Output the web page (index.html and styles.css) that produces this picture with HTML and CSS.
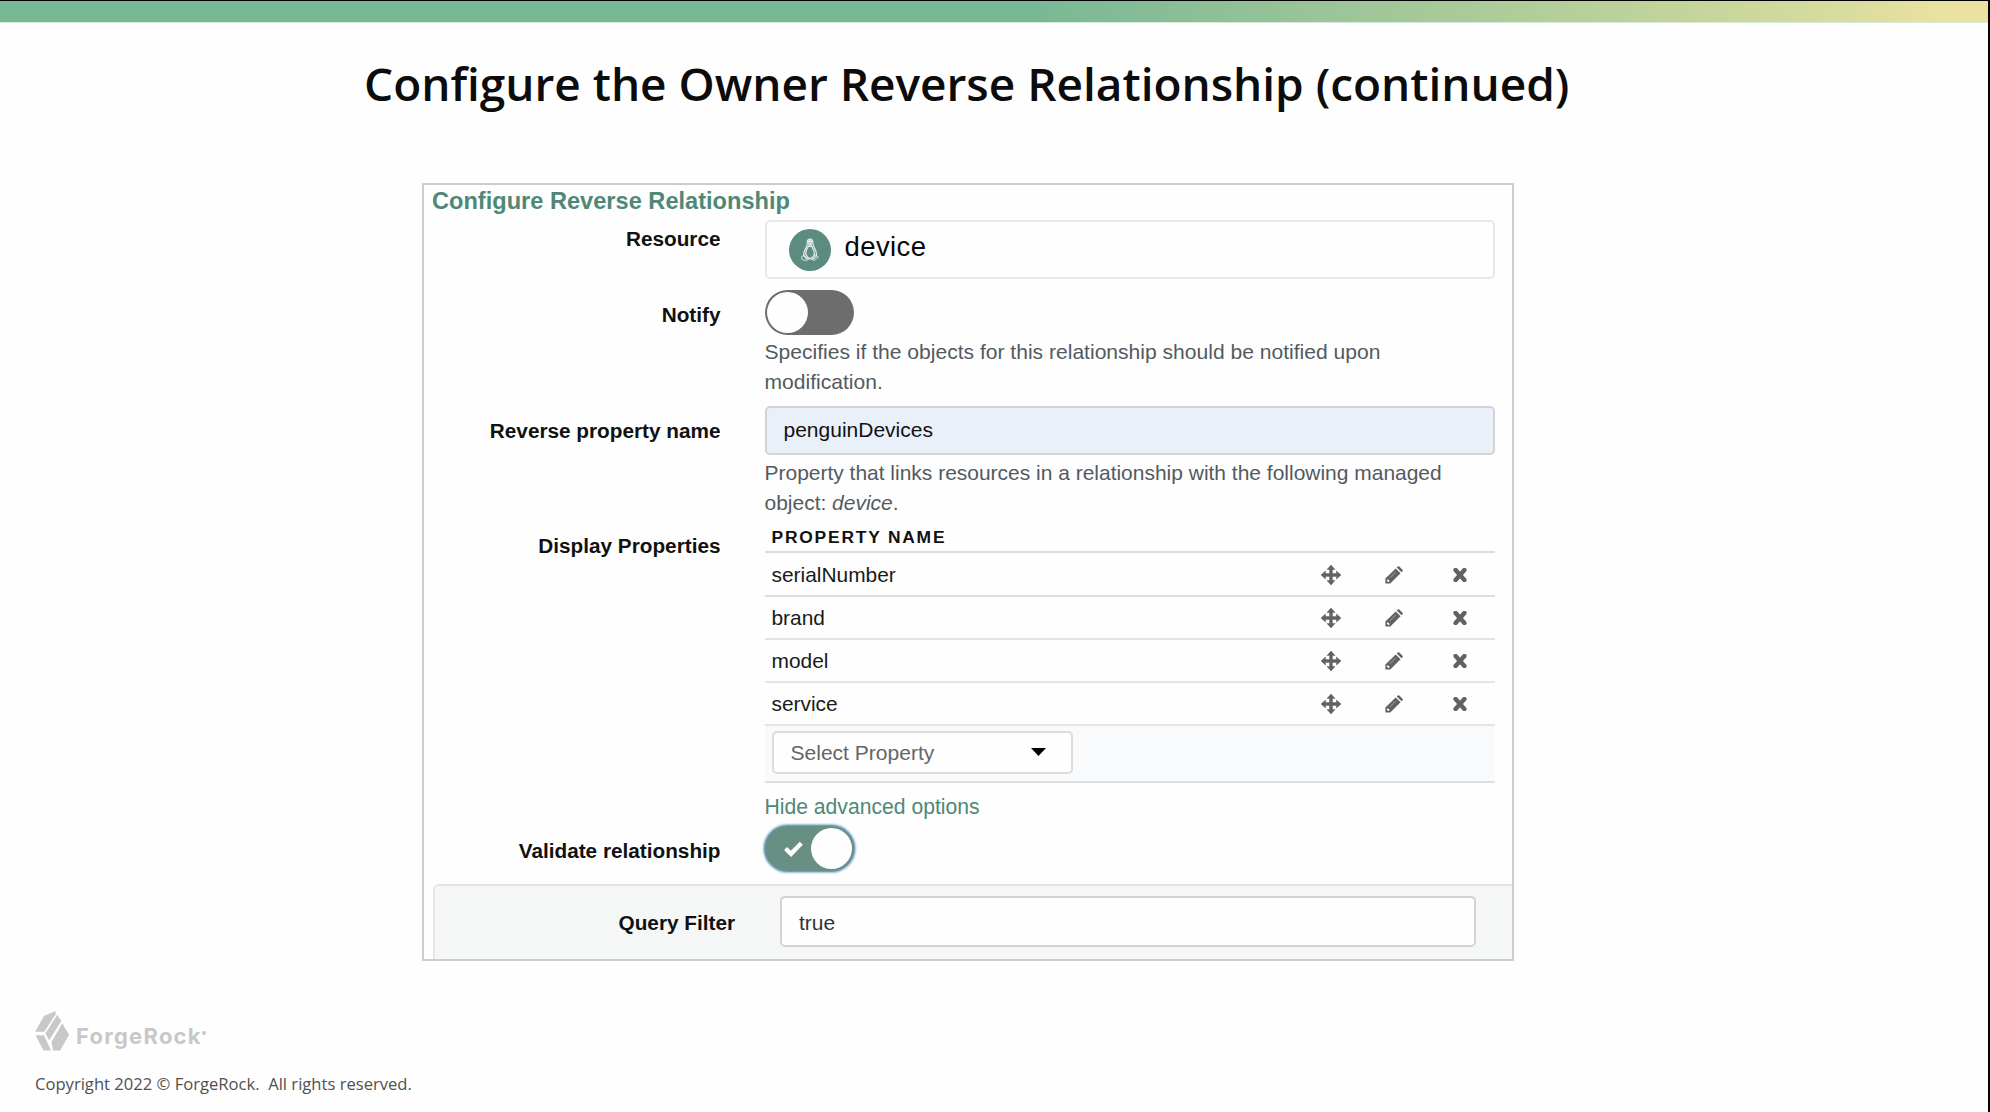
FILE: index.html
```html
<!DOCTYPE html>
<html lang="en">
<head>
<meta charset="utf-8">
<title>Configure the Owner Reverse Relationship</title>
<link rel="stylesheet" href="styles.css">
</head>
<body>
<svg class="defs" width="0" height="0" aria-hidden="true">
  <symbol id="move" viewBox="0 0 20 20">
    <path d="M10 0l4 4.500h-2.600v4.100h4.100V6L20 10l-4.500 4v-2.600h-4.100v4.100H14L10 20l-4-4.500h2.600v-4.100H4.500V14L0 10l4.500-4v2.600h4.100V4.500H6z" stroke="currentColor" stroke-width=".5" stroke-linejoin="round"/>
  </symbol>
  <symbol id="pencil" viewBox="0 0 18 18">
    <path fill-rule="evenodd" d="M10.700 2.400l4.900 4.900L5.300 17.500H.4v-4.900zM2.700 13.200l-.8.800v1.100h.9v.9h1l.9-.9z"/>
    <path d="M11.700 1.500l1-1q.8-.7 1.600 0l3.200 3.200q.7.800 0 1.600l-1 1z"/>
    <path d="M4.800 11.900l6-6" stroke="#a8a8a8" stroke-width=".9"/>
  </symbol>
  <symbol id="cross" viewBox="0 0 14 14">
    <path d="M2.600 2l8.800 10M11.400 2l-8.800 10" stroke="currentColor" stroke-width="4.400" stroke-linecap="round"/>
  </symbol>
</svg>
<div class="slide">
  <div class="accent"></div>
  <h1 class="title">Configure the Owner Reverse Relationship (continued)</h1>

  <main class="panel">
    <h2 class="panel-title">Configure Reverse Relationship</h2>

    <div class="row row-resource">
      <div class="label">Resource</div>
      <div class="field">
        <div class="resource">
          <span class="badge">
            <svg width="20" height="24" viewBox="0 0 20 24" fill="none" stroke="#e6f0ec" stroke-width="1.200">
              <path d="M7.200 5Q7 1.300 10 1.200t2.900 3.800q.1 2.800 1.700 5.400 2.300 3.800 1.800 7.400l-3 3.200H6.800l-3.200-3.500q0-3.600 2-6.900Q7.300 7.800 7.200 5z"/>
              <path d="M8.200 8.500Q5.700 12.500 5.600 16l2.800 4h3.800l2.200-3.500q0-4-2.500-8z"/>
              <path d="M8 3.200h4M8 5h4M8.300 6.800h3.600" stroke-width="1.700"/>
              <path d="M4.300 17.200l-2.600 1.500.2 2.800 4.800 1.200 1.600-1.800zM15.500 17.200l2.900 2-4.200 3.300-1.900-.8v-2.500z" stroke-width=".8"/>
            </svg>
          </span>
          <span class="resource-name">device</span>
        </div>
      </div>
    </div>

    <div class="row row-notify">
      <div class="label">Notify</div>
      <div class="field">
        <div class="toggle"><span class="knob"></span></div>
        <p class="help">Specifies if the objects for this relationship should be notified upon<br>modification.</p>
      </div>
    </div>

    <div class="row row-reverse">
      <div class="label">Reverse property name</div>
      <div class="field">
        <div class="input input-filled">penguinDevices</div>
        <p class="help">Property that links resources in a relationship with the following managed<br>object: <em>device</em>.</p>
      </div>
    </div>

    <div class="row row-display">
      <div class="label">Display Properties</div>
      <div class="field">
        <div class="thead">PROPERTY NAME</div>
        <div class="trow trow-first"><span>serialNumber</span><svg class="i-move"><use href="#move"/></svg><svg class="i-pencil"><use href="#pencil"/></svg><svg class="i-cross"><use href="#cross"/></svg></div>
        <div class="trow"><span>brand</span><svg class="i-move"><use href="#move"/></svg><svg class="i-pencil"><use href="#pencil"/></svg><svg class="i-cross"><use href="#cross"/></svg></div>
        <div class="trow"><span>model</span><svg class="i-move"><use href="#move"/></svg><svg class="i-pencil"><use href="#pencil"/></svg><svg class="i-cross"><use href="#cross"/></svg></div>
        <div class="trow"><span>service</span><svg class="i-move"><use href="#move"/></svg><svg class="i-pencil"><use href="#pencil"/></svg><svg class="i-cross"><use href="#cross"/></svg></div>
        <div class="tfoot">
          <div class="select"><span>Select Property</span><svg width="15" height="8" viewBox="0 0 15 8"><path d="M0 0h15L7.500 8z"/></svg></div>
        </div>
        <a class="link">Hide advanced options</a>
      </div>
    </div>

    <div class="row row-validate">
      <div class="label">Validate relationship</div>
      <div class="field">
        <div class="toggle toggle-on">
          <svg width="19" height="16" viewBox="0 0 19 16" fill="none" stroke="#fff" stroke-width="4.400"><path d="M1.500 7.500l5.500 5.300L17.300 2.200"/></svg>
          <span class="knob"></span>
        </div>
      </div>
    </div>

    <div class="query">
      <div class="label">Query Filter</div>
      <div class="input">true</div>
    </div>
  </main>

  <footer class="footer">
    <div class="brand">
      <svg width="34" height="40" viewBox="0 0 34 40" fill="#c8c8c9">
        <path d="M20.600 0v3.500L9.300 20.700H0L9 5z"/>
        <path d="M22.200 3.800L26.300 10 14.200 29.200l-3.800-6.700z"/>
        <path d="M27.300 12.300L34 24l-9 15.500h-7L16.500 31z"/>
        <path d="M.5 24.200h8.500L16 39.500H8.500z"/>
      </svg>
      <span class="wordmark">ForgeRock</span><span class="dot"></span>
    </div>
    <p class="copyright">Copyright 2022 © ForgeRock.&nbsp; All rights reserved.</p>
  </footer>
</div>
</body>
</html>
```
FILE: styles.css
```css
* { box-sizing: border-box; }

body {
  margin: 0;
  background: #fefefe;
  font-family: "Liberation Sans", Arial, sans-serif;
  color: #111;
}

.defs { display: block; height: 0; }

.slide {
  height: 1112px;
  border-top: 1px solid #000;
  border-right: 2px solid #000;
  overflow: hidden;
}

.accent {
  height: 22px;
  background: linear-gradient(90deg, #79b895 0%, #79b895 52%, #9bc598 67%, #bcd29a 82%, #d9dc9f 93%, #ebe29f 98%);
  border-bottom: 1px solid #d6ead8;
}

.title {
  margin: 28px 0 0 364px;
  height: 64px;
  font: 600 46px/64px "Open Sans", sans-serif;
  letter-spacing: -0.02px;
  color: #0c0c0c;
  white-space: nowrap;
}

.panel {
  width: 1092px;
  height: 778px;
  margin: 68px 0 0 422px;
  border: 2px solid #cbcccc;
  overflow: hidden;
}

.panel-title {
  height: 35px;
  margin: 0;
  padding: 1px 0 0 8px;
  font-size: 23.6px;
  line-height: 31px;
  color: #4f8877;
}

.row {
  display: grid;
  grid-template-columns: 296.5px 730.5px;
  column-gap: 44px;
}

.row-resource { height: 70px; }
.row-notify { height: 116px; }
.row-reverse { height: 117px; }
.row-display { height: 303px; }
.row-validate { height: 58px; }

.label {
  font-size: 20.75px;
  font-weight: bold;
  line-height: 24px;
  text-align: right;
  white-space: nowrap;
}

.row-resource .label { padding-top: 7px; }
.row-notify .label { padding-top: 13px; }
.row-reverse .label { padding-top: 13px; }
.row-display .label { padding-top: 11px; }
.row-validate .label { padding-top: 13px; }

.resource {
  display: flex;
  align-items: center;
  height: 59px;
  padding-left: 22px;
  border: 2px solid #e8e8e8;
  border-radius: 5px;
}

.badge {
  display: flex;
  align-items: center;
  justify-content: center;
  width: 42px;
  height: 42px;
  border-radius: 50%;
  background: #5c8c80;
}

.resource-name {
  margin-left: 14px;
  padding-bottom: 6px;
  font-size: 27.5px;
  letter-spacing: 0.4px;
  color: #080808;
}

.toggle {
  display: flex;
  align-items: center;
  width: 89px;
  height: 45px;
  padding: 0 2px;
  border-radius: 23px;
  background: #6d6d6d;
}

.knob {
  width: 41px;
  height: 41px;
  border-radius: 50%;
  background: #fefefe;
}

.toggle-on {
  justify-content: space-between;
  padding-left: 19px;
  background: #688f83;
  box-shadow: 0 0 0 1px #75a0b3, 0 0 2px 2px #94bbdf;
}

.help {
  margin: 2px 0 0;
  font-size: 21.07px;
  line-height: 29.5px;
  color: #535a5f;
  white-space: nowrap;
}

.row-reverse .help { margin-top: 3px; font-size: 20.98px; }

.input {
  height: 49px;
  padding-left: 17px;
  border: 2px solid #d2d3d4;
  border-radius: 5px;
  background: #fefefe;
  font-size: 21px;
  line-height: 47px;
}

.input-filled { line-height: 44px; background: #eaf0fa; }

.thead {
  height: 30px;
  padding-left: 7px;
  border-bottom: 2px solid #dcdddd;
  font-size: 17.4px;
  font-weight: bold;
  line-height: 28px;
  letter-spacing: 1.8px;
}

.trow {
  display: flex;
  align-items: center;
  height: 43px;
  padding: 1px 28px 0 7px;
  border-bottom: 2px solid #e3e4e4;
  font-size: 20.9px;
  color: #1a1a1a;
}

.trow-first { height: 44px; border-color: #dcdddd; }
.trow span { flex: 1; }

.trow svg { color: #626262; fill: #626262; }
.i-move { width: 20px; height: 20px; }
.i-pencil { width: 18px; height: 18px; margin: 0 50px 0 44px; }
.trow .i-cross { width: 14px; height: 14px; }

.tfoot {
  height: 57px;
  padding: 5px 0 0 7px;
  border-bottom: 2px solid #dfe0e1;
  background: #f9fafc;
}

.select {
  display: flex;
  align-items: center;
  justify-content: space-between;
  width: 301px;
  height: 43px;
  padding: 1px 25px 0 17px;
  border: 2px solid #dcdcdd;
  border-radius: 5px;
  background: #fefefe;
  font-size: 21.04px;
  color: #656565;
}

.select svg { margin-bottom: 2px; }

.link {
  display: block;
  margin-top: 9px;
  font-size: 21.15px;
  line-height: 30px;
  color: #4f8877;
}

.query {
  display: grid;
  grid-template-columns: 300px 696px;
  column-gap: 45px;
  height: 90px;
  margin-left: 9px;
  padding-top: 10px;
  border: solid #e4e6e6;
  border-width: 2px 0 0 2px;
  border-radius: 6px 0 0 0;
  background: #f5f6f6;
}

.query .label { padding-top: 15px; }
.query .input { height: 51px; line-height: 49px; color: #333; }

.footer { margin: 50px 0 0 35px; }

.brand {
  display: flex;
  align-items: flex-start;
  height: 40px;
}

.wordmark {
  margin-left: 7px;
  padding-top: 9px;
  font: 700 22px/32px Inter, sans-serif;
  letter-spacing: 1.25px;
  color: #c8c8c9;
}

.dot {
  width: 4px;
  height: 4px;
  margin-top: 20px;
  border-radius: 50%;
  background: #c8c8c9;
}

.copyright {
  margin: 21px 0 0;
  font: 16.6px/24px "Open Sans", sans-serif;
  color: #505050;
  white-space: nowrap;
}
```
